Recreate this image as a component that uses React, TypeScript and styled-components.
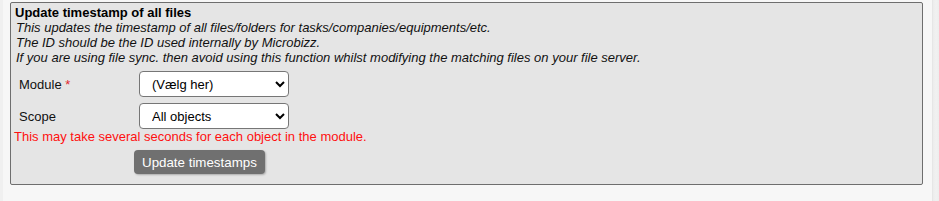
import React from 'react'
import styled, { createGlobalStyle } from 'styled-components'

const GlobalStyle = createGlobalStyle`
  html, body {
    margin: 0;
    padding: 0;
    background: #f7f7f7;
    font-family: "Liberation Sans", Arial, sans-serif;
    font-size: 13px;
    color: #000;
  }
`

const Page = styled('div')`
  display: flex;
  min-height: 201px;
  border-left: 3px solid #f0f0f0;
`

const Main = styled('main')`
  flex: 1;
  padding: 2px 9px 0 7px;
`

const SideEdge = styled('div')`
  width: 6px;
  background: linear-gradient(to right, #ececec, #f1f1f1 50%, #ededed);
  border-left: 1px solid #e6e6e6;
`

const Panel = styled('section')`
  background: #e5e5e5;
  border: 1px solid #6e6e6e;
  border-radius: 2px;
  padding: 2px 3px 10px 3px;
  line-height: 15px;
`

const Title = styled('div')`
  font-weight: bold;
  padding-left: 1px;
`

const Note = styled('div')`
  font-style: italic;
  padding-left: 2px;
  color: #111;
`

const FormGrid = styled('div')`
  display: grid;
  grid-template-columns: 120px 150px;
  grid-auto-rows: 26px;
  row-gap: 6px;
  margin-top: 6px;
  padding-left: 5px;
  align-items: center;
`

const Label = styled('label')`
  color: #111;
`

const Required = styled('span')`
  color: #e0282e;
`

const Select = styled('select')`
  width: 150px;
  height: 26px;
  box-sizing: border-box;
  border: 1px solid #767676;
  border-radius: 4px;
  background: #fff;
  font-family: "Liberation Sans", Arial, sans-serif;
  font-size: 13px;
  color: #000;
  padding: 0 4px 0 8px;
`

const Warning = styled('div')`
  color: #ff1010;
`

const SubmitButton = styled('button')`
  margin: 6px 0 0 120px;
  height: 24px;
  padding: 0 8px;
  border: none;
  border-radius: 4px;
  background: #707070;
  color: #fff;
  font-family: "Liberation Sans", Arial, sans-serif;
  font-size: 13.33px;
  box-shadow: 1px 1px 2px rgba(0, 0, 0, 0.25);
  cursor: pointer;
`

export default function App() {
  return (
    <>
      <GlobalStyle />
      <Page>
        <Main>
          <Panel>
            <Title>Update timestamp of all files</Title>
            <Note>This updates the timestamp of all files/folders for tasks/companies/equipments/etc.</Note>
            <Note>The ID should be the ID used internally by Microbizz.</Note>
            <Note>
              If you are using file sync. then avoid using this function whilst modifying the matching files on your
              file server.
            </Note>
            <FormGrid>
              <Label htmlFor="module">
                Module <Required>*</Required>
              </Label>
              <Select id="module" defaultValue="">
                <option value="">(Vælg her)</option>
              </Select>
              <Label htmlFor="scope">Scope</Label>
              <Select id="scope" defaultValue="all">
                <option value="all">All objects</option>
              </Select>
            </FormGrid>
            <Warning>This may take several seconds for each object in the module.</Warning>
            <SubmitButton type="button">Update timestamps</SubmitButton>
          </Panel>
        </Main>
        <SideEdge />
      </Page>
    </>
  )
}
